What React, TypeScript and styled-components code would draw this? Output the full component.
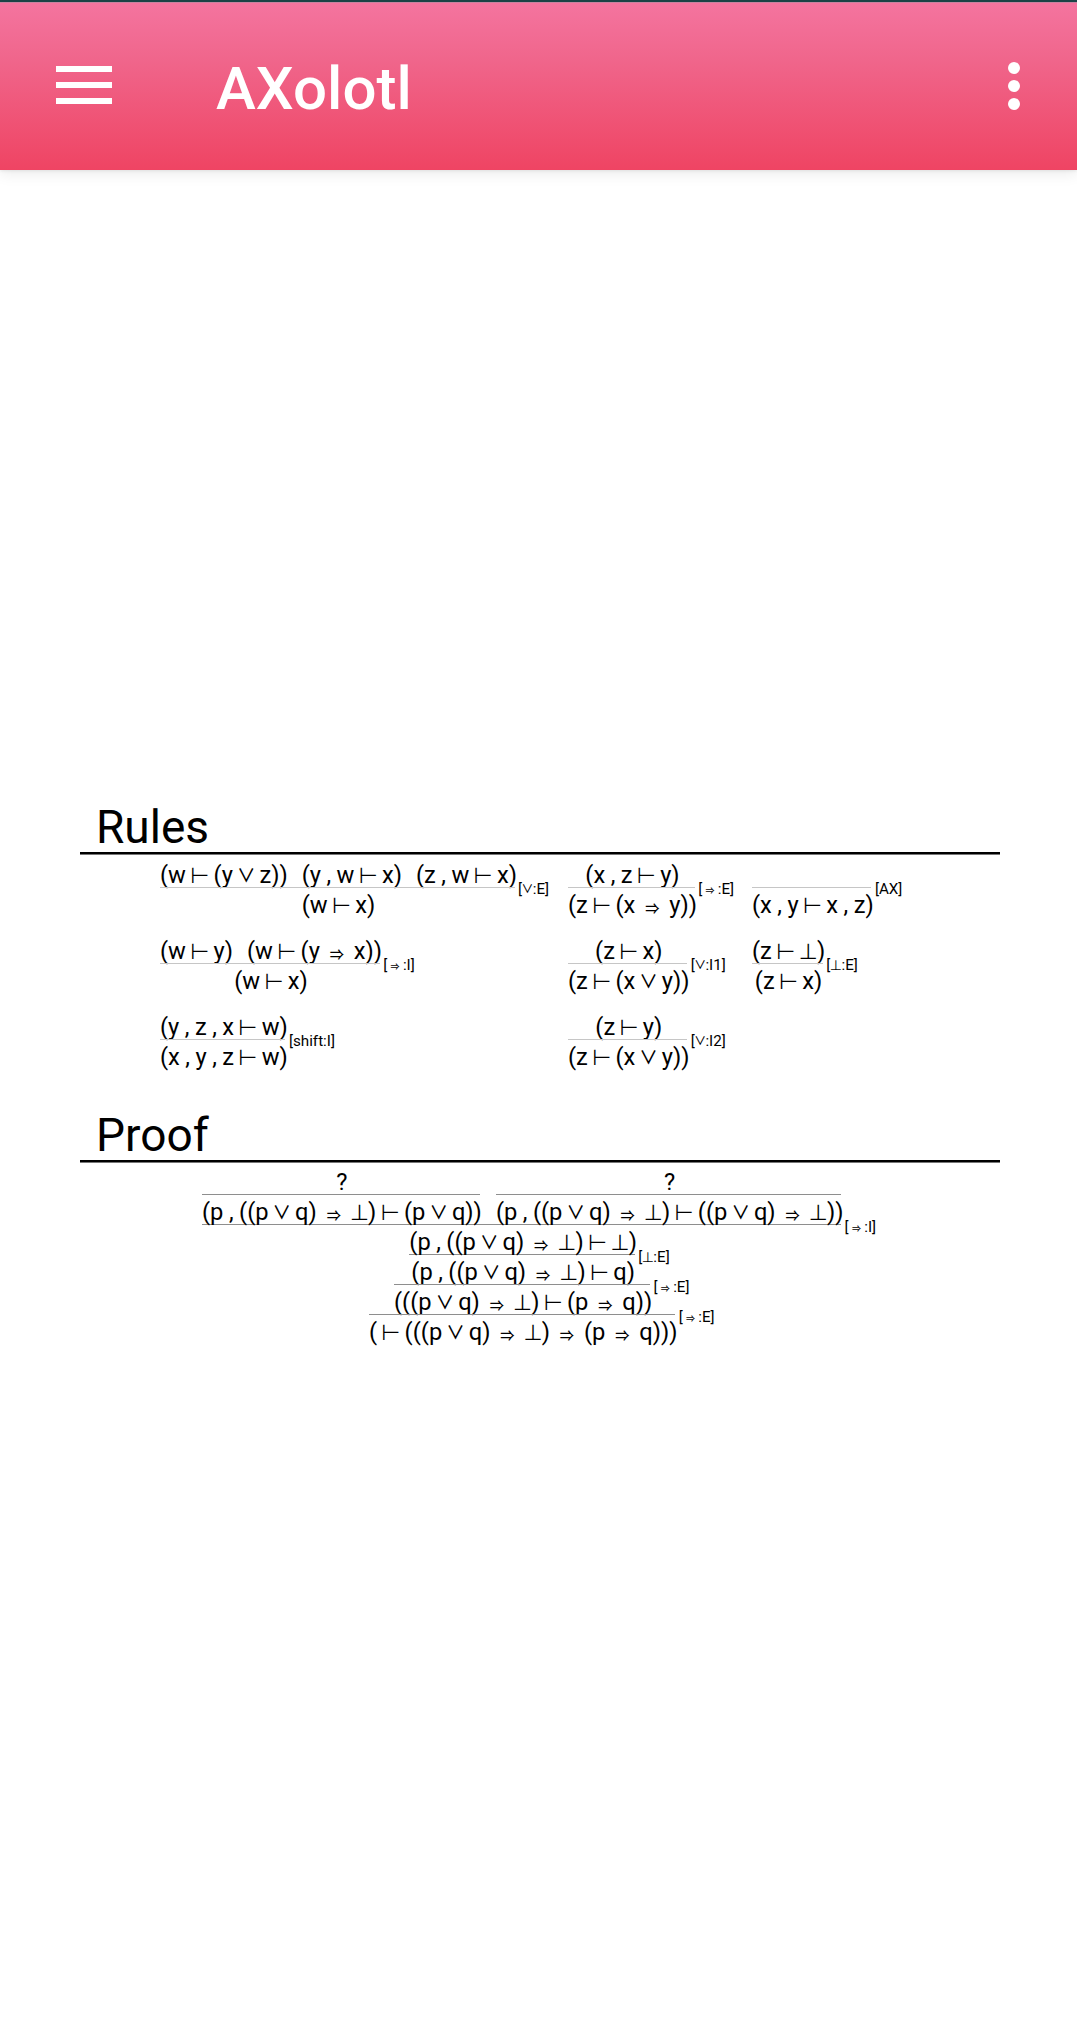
import React from 'react';
import styled, { createGlobalStyle } from 'styled-components';

const GlobalStyle = createGlobalStyle`
  * {
    box-sizing: border-box;
  }
  body {
    margin: 0;
    background: #fff;
    color: #000;
    font-family: Roboto, 'Liberation Sans', sans-serif;
  }
`;

const Screen = styled.div`
  display: flex;
  flex-direction: column;
  width: 1077px;
  height: 2031px;
  overflow: hidden;
  background: #fff;
`;

const StatusEdge = styled.div`
  height: 2px;
  flex: none;
  background: #1d4549;
`;

const Toolbar = styled.header`
  display: flex;
  align-items: center;
  flex: none;
  height: 168px;
  padding: 2px 57px 0 56px;
  border-top: 1px solid #c983a0;
  background: linear-gradient(#f4749f, #f0668c 33%, #ef4463);
  box-shadow: 0 4px 14px rgba(0, 0, 0, 0.08), 0 1px 3px rgba(0, 0, 0, 0.08);
`;

const MenuButton = styled.button`
  display: flex;
  flex-direction: column;
  gap: 10px;
  width: 56px;
  margin: 0 0 5px;
  padding: 0;
  border: 0;
  background: none;
`;

const MenuBar = styled.span`
  height: 6px;
  background: #fff;
`;

const Title = styled.h1`
  flex: 1;
  margin: 2px 0 0 104px;
  color: #fff;
  font-size: 60px;
  font-weight: 500;
  line-height: 70px;
`;

const MoreButton = styled.button`
  display: flex;
  flex-direction: column;
  gap: 6px;
  margin: 0 0 3px;
  padding: 0;
  border: 0;
  background: none;
`;

const Dot = styled.span`
  width: 12px;
  height: 12px;
  border-radius: 50%;
  background: #fff;
`;

const Content = styled.main`
  display: flex;
  flex-direction: column;
  padding: 630px 77px 0 80px;
`;

const SectionTitle = styled.h2`
  height: 54px;
  margin: 0 0 1px;
  padding-left: 16px;
  border-bottom: 2px solid #000;
  box-shadow: 0 1px #777;
  font-size: 46px;
  font-weight: 400;
  line-height: 54px;
`;

const RuleGrid = styled.div`
  display: grid;
  grid-template-columns: 408px 184px auto;
  grid-auto-rows: 60px;
  row-gap: 16px;
  height: 253px;
  padding: 3px 0 0 80px;
`;

const Inference = styled.div`
  display: flex;
  align-items: center;
`;

const Fraction = styled.div`
  display: flex;
  flex-direction: column;
`;

const Premises = styled.div`
  display: flex;
  justify-content: center;
  gap: 16.3px;
  height: 29px;
`;

const Conclusion = styled.div`
  display: flex;
  justify-content: center;
  height: 31px;
  border-top: 1px solid #c6c6c6;
`;

const Statement = styled.span`
  height: 30px;
  margin-right: -2.3px;
  font-size: 23.7px;
  line-height: 35px;
  white-space: pre;
  word-spacing: -0.4px;
`;

const RuleName = styled.span`
  margin-left: 3.5px;
  padding-top: 2px;
  font-size: 15.2px;
  line-height: 32px;
  white-space: pre;
`;

const Operator = styled.span<{ $width: number; $size: number; $lift: number; $cjk?: boolean }>`
  display: inline-flex;
  justify-content: center;
  width: ${(p) => p.$width}em;
  line-height: 0;

  & > span {
    position: relative;
    top: ${(p) => -p.$lift}em;
    font-family: ${(p) => (p.$cjk ? "'Noto Sans CJK JP'" : "'DejaVu Sans'")}, sans-serif;
    font-size: ${(p) => p.$size}em;
    font-weight: ${(p) => (p.$cjk ? 500 : 400)};
  }
`;

const ProofTree = styled.div`
  display: flex;
  flex-direction: column;
  width: 640px;
  margin: 2px 0 0 122px;
`;

const Leaves = styled.div`
  display: flex;
  align-items: flex-end;
`;

const Leaf = styled.div`
  display: flex;
  flex-direction: column;
`;

const LeafGap = styled.div`
  width: 16.3px;
  flex: none;
  border-bottom: 1px solid #8e8e8e;
`;

const Step = styled.div`
  display: flex;
  justify-content: center;
  height: 30px;
`;

const Ruled = styled.div<{ $top?: boolean; $bottom?: boolean }>`
  display: flex;
  justify-content: center;
  height: 31px;
  margin-top: -1px;
  border-top: 1px solid ${(p) => (p.$top ? '#8e8e8e' : 'transparent')};
  border-bottom: 1px solid ${(p) => (p.$bottom ? '#8e8e8e' : 'transparent')};
`;

const StepName = styled(RuleName)<{ $below?: boolean }>`
  width: 0;
  height: 30px;
  margin-top: ${(p) => (p.$below ? 15 : -15)}px;
  margin-right: -3.5px;
  line-height: 30px;
`;

const LeafName = styled(RuleName)`
  width: 0;
  height: 30px;
  margin-bottom: -15px;
  line-height: 30px;
`;

type Glyph = { width: number; size: number; lift: number; cjk?: boolean };

const glyphs: Record<string, Glyph> = {
  '⊢': { width: 1.165, size: 0.92, lift: 0 },
  '∨': { width: 1.12, size: 0.78, lift: 0.05, cjk: true },
  '⇒': { width: 1.43, size: 0.6, lift: -0.05, cjk: true },
  '⊥': { width: 0.735, size: 0.92, lift: 0 },
};

const tightWidths: Record<string, number> = { '∨': 0.7, '⇒': 1.03 };

function Formula({ text, tight }: { text: string; tight?: boolean }) {
  return (
    <>
      {text.split(/([⊢∨⇒⊥])/).map((part, i) => {
        const g = glyphs[part];
        if (!g) return part.replace(/,/g, ' , ');
        const width = (tight && tightWidths[part]) || g.width;
        return (
          <Operator key={i} $width={width} $size={g.size} $lift={g.lift} $cjk={g.cjk}>
            <span>{part}</span>
          </Operator>
        );
      })}
    </>
  );
}

const Sequent = ({ text }: { text: string }) => (
  <Statement>
    <Formula text={text} />
  </Statement>
);

type Rule = { premises: string[]; conclusion: string; name: string };

const rules: Rule[] = [
  { premises: ['(w⊢(y∨z))', '(y,w⊢x)', '(z,w⊢x)'], conclusion: '(w⊢x)', name: '∨:E' },
  { premises: ['(x,z⊢y)'], conclusion: '(z⊢(x⇒y))', name: '⇒:E' },
  { premises: [], conclusion: '(x,y⊢x,z)', name: 'AX' },
  { premises: ['(w⊢y)', '(w⊢(y⇒x))'], conclusion: '(w⊢x)', name: '⇒:I' },
  { premises: ['(z⊢x)'], conclusion: '(z⊢(x∨y))', name: '∨:I1' },
  { premises: ['(z⊢⊥)'], conclusion: '(z⊢x)', name: '⊥:E' },
  { premises: ['(y,z,x⊢w)'], conclusion: '(x,y,z⊢w)', name: 'shift:I' },
  { premises: ['(z⊢y)'], conclusion: '(z⊢(x∨y))', name: '∨:I2' },
];

const leaves = ['(p,((p∨q)⇒⊥)⊢(p∨q))', '(p,((p∨q)⇒⊥)⊢((p∨q)⇒⊥))'];

const steps = [
  { text: '(p,((p∨q)⇒⊥)⊢⊥)', name: '⊥:E', bottom: true, below: true },
  { text: '(p,((p∨q)⇒⊥)⊢q)' },
  { text: '(((p∨q)⇒⊥)⊢(p⇒q))', name: '⇒:E', top: true },
  { text: '(⊢(((p∨q)⇒⊥)⇒(p⇒q)))', name: '⇒:E', top: true },
];

function ProofLeaf({ text }: { text: string }) {
  return (
    <Leaf>
      <Step>
        <Sequent text="?" />
      </Step>
      <Ruled $top $bottom>
        <Sequent text={text} />
      </Ruled>
    </Leaf>
  );
}

export default function App() {
  return (
    <Screen>
      <GlobalStyle />
      <StatusEdge />
      <Toolbar>
        <MenuButton aria-label="Menu">
          <MenuBar />
          <MenuBar />
          <MenuBar />
        </MenuButton>
        <Title>AXolotl</Title>
        <MoreButton aria-label="More options">
          <Dot />
          <Dot />
          <Dot />
        </MoreButton>
      </Toolbar>
      <Content>
        <SectionTitle>Rules</SectionTitle>
        <RuleGrid>
          {rules.map((rule) => (
            <Inference key={rule.name}>
              <Fraction>
                <Premises>
                  {rule.premises.map((p) => (
                    <Sequent key={p} text={p} />
                  ))}
                </Premises>
                <Conclusion>
                  <Sequent text={rule.conclusion} />
                </Conclusion>
              </Fraction>
              <RuleName>
                [<Formula text={rule.name} tight />]
              </RuleName>
            </Inference>
          ))}
        </RuleGrid>
        <SectionTitle>Proof</SectionTitle>
        <ProofTree>
          <Leaves>
            <ProofLeaf text={leaves[0]} />
            <LeafGap />
            <ProofLeaf text={leaves[1]} />
            <LeafName>
              [<Formula text="⇒:I" tight />]
            </LeafName>
          </Leaves>
          {steps.map((s) => (
            <Step key={s.text}>
              <Ruled $top={s.top} $bottom={s.bottom}>
                <Sequent text={s.text} />
              </Ruled>
              {s.name && (
                <StepName $below={s.below}>
                  [<Formula text={s.name} tight />]
                </StepName>
              )}
            </Step>
          ))}
        </ProofTree>
      </Content>
    </Screen>
  );
}
